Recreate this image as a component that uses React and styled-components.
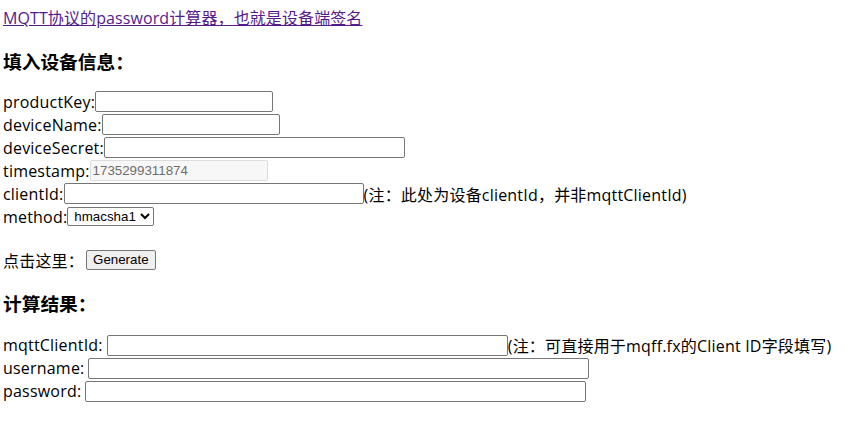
import styled, { createGlobalStyle } from "styled-components"

const Global = createGlobalStyle`
    body {
        margin: 0;
        padding: 8px 0 0 3px;
        background: #fff;
        color: #000;
        font-family: "Open Sans", "Noto Sans CJK SC", sans-serif;
        font-size: 16px;
        letter-spacing: 0.2px;
    }
`

const TopLink = styled.a`
    display: block;
    line-height: 21px;
    color: #551a8b;
    text-decoration: underline;
    letter-spacing: 0.1px;
    width: max-content;
`

const Heading = styled.h3`
    margin: 18.72px 0 ${p => p.bottom}px;
    font-size: 18.72px;
    line-height: 25px;
    font-weight: bold;
    letter-spacing: 0;
    font-family: "Noto Sans CJK SC", sans-serif;
`

const Row = styled.div`
    display: flex;
    align-items: center;
    height: 23px;
    white-space: nowrap;
    margin-top: ${p => p.gap || 0}px;
`

const Label = styled.span`
    margin-right: ${p => (p.spaced ? 4 : 0)}px;
`

const Field = styled.input`
    box-sizing: border-box;
    width: ${p => p.w}px;
    height: 21px;
    padding: 1px 2px;
    border: 1px solid #767676;
    border-radius: 2px;
    font-family: "Liberation Sans", Arial, sans-serif;
    font-size: 13.33px;
    letter-spacing: 0;
    color: #000;
    background: #fff;

    &:disabled {
        background: #f7f7f7;
        border-color: #dcdcdc;
        color: #6d6d6d;
    }
`

const Select = styled.select`
    box-sizing: border-box;
    width: 87px;
    height: 19px;
    border: 1px solid #767676;
    border-radius: 2px;
    font-family: "Liberation Sans", Arial, sans-serif;
    font-size: 13.33px;
    letter-spacing: 0;
    padding: 0 0 0 2px;
    background: #fff;
    color: #000;
`

const Button = styled.button`
    box-sizing: border-box;
    height: 20px;
    padding: 1px 6px;
    margin-left: 2px;
    border: 1px solid #767676;
    border-radius: 2px;
    background: #efefef;
    font-family: "Liberation Sans", Arial, sans-serif;
    font-size: 13.33px;
    letter-spacing: 0;
    color: #000;
`

export default function App() {
    return (
        <>
            <Global />
            <TopLink href="#">MQTT协议的password计算器，也就是设备端签名</TopLink>

            <Heading bottom={17.72}>填入设备信息：</Heading>
            <Row><Label>productKey:</Label><Field w={178} /></Row>
            <Row><Label>deviceName:</Label><Field w={178} /></Row>
            <Row><Label>deviceSecret:</Label><Field w={301} /></Row>
            <Row><Label>timestamp:</Label><Field w={178} disabled defaultValue="1735299311874" /></Row>
            <Row><Label>clientId:</Label><Field w={300} /><span>(注：此处为设备clientId，并非mqttClientId)</span></Row>
            <Row>
                <Label>method:</Label>
                <Select defaultValue="hmacsha1">
                    <option value="hmacsha1">hmacsha1</option>
                    <option value="hmacmd5">hmacmd5</option>
                    <option value="hmacsha256">hmacsha256</option>
                </Select>
            </Row>

            <Row gap={20}><Label>点击这里：</Label><Button>Generate</Button></Row>

            <Heading bottom={18.72}>计算结果：</Heading>
            <Row><Label spaced>mqttClientId:</Label><Field w={401} /><span>(注：可直接用于mqff.fx的Client ID字段填写)</span></Row>
            <Row><Label spaced>username:</Label><Field w={501} /></Row>
            <Row><Label spaced>password:</Label><Field w={501} /></Row>
        </>
    )
}
